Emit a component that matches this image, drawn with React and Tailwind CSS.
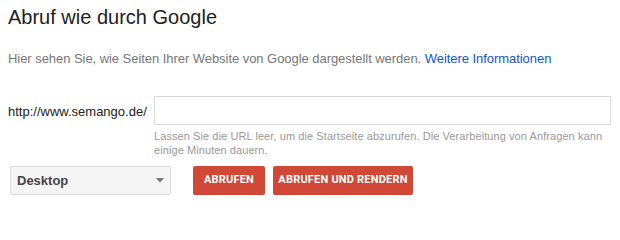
import React from "react";

export default function App() {
  return (
    <div className="w-[620px] h-[205px] bg-white overflow-hidden font-['Liberation_Sans',Arial,sans-serif]">
      <h1 className="pl-2 pt-[5px] text-[20px] leading-[24px] text-[#222] font-normal">
        Abruf wie durch Google
      </h1>
      <p className="pl-2 mt-[22px] text-[13px] leading-[16px] text-[#777] tracking-[-0.05px]">
        Hier sehen Sie, wie Seiten Ihrer Website von Google dargestellt werden.{" "}
        <a className="text-[#1155cc]" href="#">Weitere Informationen</a>
      </p>
      <div className="mt-[29px] flex items-center">
        <label className="pl-2 w-[154px] text-[13px] leading-[16px] text-[#222] pt-[3px]">
          http://www.semango.de/
        </label>
        <input
          type="text"
          className="w-[457px] h-[29px] border border-[#d9d9d9] bg-white outline-none px-2 text-[13px]"
        />
      </div>
      <p className="ml-[154px] mt-[5px] w-[450px] text-[11px] leading-[13.5px] text-[#999] tracking-[0.08px]">
        Lassen Sie die URL leer, um die Startseite abzurufen. Die Verarbeitung von Anfragen kann einige Minuten dauern.
      </p>
      <div className="mt-[9px] flex items-center">
        <div className="ml-[10px] w-[161px] h-[29px] border border-[#dcdcdc] bg-[#f5f5f5] rounded-[2px] flex items-center justify-between pl-[6px] pr-[6px]">
          <span className="text-[13px] font-bold text-[#444]">Desktop</span>
          <svg width="8" height="5" viewBox="0 0 8 5">
            <path d="M0 0 L8 0 L4 4.5 Z" fill="#777" />
          </svg>
        </div>
        <button className="ml-[22px] w-[72px] h-[29px] rounded-[2px] bg-[#d14836] text-white text-[11px] font-bold font-['Roboto',sans-serif] tracking-[0.2px]">
          ABRUFEN
        </button>
        <button className="ml-[8px] w-[140px] h-[29px] rounded-[2px] bg-[#d14836] text-white text-[11px] font-bold font-['Roboto',sans-serif] tracking-[0.2px]">
          ABRUFEN UND RENDERN
        </button>
      </div>
    </div>
  );
}
